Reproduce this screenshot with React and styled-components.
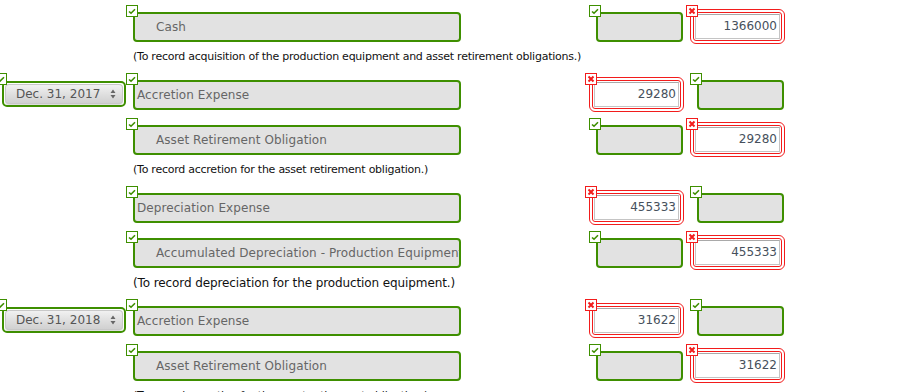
import React from 'react';
import styled, { createGlobalStyle } from 'styled-components';

const GlobalStyle = createGlobalStyle`
  html, body {
    margin: 0;
    padding: 0;
    background: #fff;
    overflow: hidden;
  }
  body {
    font-family: "DejaVu Sans", Verdana, sans-serif;
  }
`;

const GREEN = '#3e8f00';
const RED = '#f21c1c';

const entries = [
  { type: 'row', account: 'Cash', indent: true, debit: { ok: true }, credit: { ok: false, value: '1366000' } },
  { type: 'note', text: '(To record acquisition of the production equipment and asset retirement obligations.)' },
  { type: 'row', date: 'Dec. 31, 2017', account: 'Accretion Expense', debit: { ok: false, value: '29280' }, credit: { ok: true } },
  { type: 'row', account: 'Asset Retirement Obligation', indent: true, debit: { ok: true }, credit: { ok: false, value: '29280' } },
  { type: 'note', text: '(To record accretion for the asset retirement obligation.)' },
  { type: 'row', account: 'Depreciation Expense', debit: { ok: false, value: '455333' }, credit: { ok: true } },
  { type: 'row', account: 'Accumulated Depreciation - Production Equipment', indent: true, debit: { ok: true }, credit: { ok: false, value: '455333' } },
  { type: 'note', text: '(To record depreciation for the production equipment.)', large: true },
  { type: 'row', date: 'Dec. 31, 2018', account: 'Accretion Expense', debit: { ok: false, value: '31622' }, credit: { ok: true } },
  { type: 'row', account: 'Asset Retirement Obligation', indent: true, debit: { ok: true }, credit: { ok: false, value: '31622' } },
  { type: 'note', text: '(To record accretion for the asset retirement obligation.)' },
];

const Journal = styled.div`
  padding-top: 5px;
  width: 920px;
  height: 392px;
  overflow: hidden;
`;

const Row = styled.div`
  display: flex;
  align-items: flex-start;
  padding: 7px 0 8px 2px;
  height: 30px;
`;

const Cell = styled.div`
  position: relative;
  flex: none;
  width: ${(p) => p.$width}px;
  margin-left: ${(p) => p.$gap || 0}px;
  height: 30px;
`;

const Badge = styled.span`
  position: absolute;
  top: -7px;
  left: ${(p) => (p.$ok ? -7 : -11)}px;
  width: 12px;
  height: 12px;
  box-sizing: border-box;
  border: 1px solid ${(p) => (p.$ok ? GREEN : RED)};
  background: #fff;
  z-index: 2;
  display: flex;
  align-items: center;
  justify-content: center;
`;

const GreenField = styled.div`
  box-sizing: border-box;
  height: 30px;
  border: 2px solid ${GREEN};
  border-radius: 4px;
  background: #e2e2e2;
  color: #666;
  font-size: 12px;
  letter-spacing: 0.08px;
  line-height: 26px;
  padding-left: ${(p) => (p.$indent ? 21 : 2)}px;
  white-space: nowrap;
  overflow: hidden;
`;

const RedFrame = styled.div`
  box-sizing: border-box;
  margin: -3px -1px 0 -7px;
  height: 35px;
  border: 1px solid ${RED};
  border-radius: 6px;
  padding: 2px;
`;

const RedInner = styled.div`
  box-sizing: border-box;
  height: 100%;
  border: 1px solid ${RED};
  border-radius: 3px;
  padding: 1px;
`;

const NumberInput = styled.div`
  box-sizing: border-box;
  height: 100%;
  border: 1px solid #c4c4c4;
  border-top-color: #a9a9a9;
  background: #fff;
  color: #46505c;
  font-size: 12px;
  line-height: 23px;
  text-align: right;
  padding-right: 2px;
`;

const DateBox = styled.div`
  box-sizing: border-box;
  margin-top: 1px;
  height: 26px;
  border: 2px solid ${GREEN};
  border-radius: 5px;
  padding: 1px;
`;

const DateButton = styled.div`
  box-sizing: border-box;
  height: 100%;
  border-radius: 4px;
  background: linear-gradient(#f3f3f3, #dcdcdc 60%, #cfcfcf);
  box-shadow: inset 0 0 0 1px #c8c8c8, 0 1px 1px rgba(0, 0, 0, 0.15);
  color: #555;
  font-size: 12px;
  line-height: 20px;
  padding: 0 7px 0 11px;
  display: flex;
  justify-content: space-between;
  align-items: center;
`;

const Note = styled.div`
  height: 23px;
  padding-left: 133px;
  font-size: ${(p) => (p.$large ? 12 : 11)}px;
  letter-spacing: ${(p) => (p.$large ? -0.1 : -0.25)}px;
  line-height: 14px;
  color: #111;
  white-space: nowrap;
`;

const Check = () => (
  <svg width="10" height="10" viewBox="0 0 10 10">
    <path d="M2 5.5 L4 7.2 L8 3.2" fill="none" stroke={GREEN} strokeWidth="1.6" />
  </svg>
);

const Cross = () => (
  <svg width="10" height="10" viewBox="0 0 10 10">
    <path d="M2.5 2.5 L7.5 7.5 M7.5 2.5 L2.5 7.5" fill="none" stroke={RED} strokeWidth="2" />
  </svg>
);

const SelectArrows = () => (
  <svg width="6" height="10" viewBox="0 0 6 10">
    <path d="M3 0.5 L5.5 4 L0.5 4 Z M3 9.5 L5.5 6 L0.5 6 Z" fill="#666" />
  </svg>
);

const Mark = ({ ok }) => <Badge $ok={ok}>{ok ? <Check /> : <Cross />}</Badge>;

const AmountCell = ({ gap, ok, value }) => (
  <Cell $width={87} $gap={gap}>
    <Mark ok={ok} />
    {ok ? (
      <GreenField />
    ) : (
      <RedFrame>
        <RedInner>
          <NumberInput>{value}</NumberInput>
        </RedInner>
      </RedFrame>
    )}
  </Cell>
);

const EntryRow = ({ date, account, indent, debit, credit }) => (
  <Row>
    <Cell $width={124}>
      {date && (
        <>
          <Mark ok />
          <DateBox>
            <DateButton>
              <span>{date}</span>
              <SelectArrows />
            </DateButton>
          </DateBox>
        </>
      )}
    </Cell>
    <Cell $width={328} $gap={7}>
      <Mark ok />
      <GreenField $indent={indent}>{account}</GreenField>
    </Cell>
    <AmountCell gap={135} {...debit} />
    <AmountCell gap={14} {...credit} />
  </Row>
);

export default function App() {
  return (
    <>
      <GlobalStyle />
      <Journal>
        {entries.map((e, i) =>
          e.type === 'note' ? (
            <Note key={i} $large={e.large}>{e.text}</Note>
          ) : (
            <EntryRow key={i} {...e} />
          )
        )}
      </Journal>
    </>
  );
}
